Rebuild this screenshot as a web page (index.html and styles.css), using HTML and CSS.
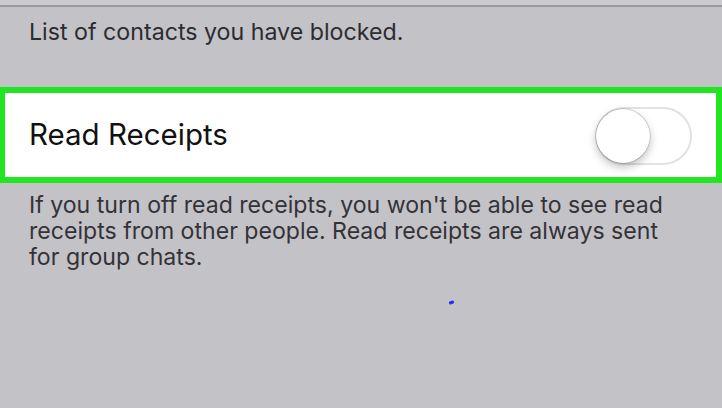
FILE: index.html
```html
<!DOCTYPE html>
<html>
<head>
<meta charset="utf-8">
<link rel="stylesheet" href="styles.css">
</head>
<body>
<div class="topbar"></div>
<p class="note">List of contacts you have blocked.</p>
<div class="cell">
  <span class="cell-label">Read Receipts</span>
  <div class="toggle"><div class="knob"></div></div>
</div>
<p class="footer">If you turn off read receipts, you won't be able to see read receipts from other people. Read receipts are always sent for group chats.</p>
<span class="dot"></span>
</body>
</html>
```
FILE: styles.css
```css
html, body { margin: 0; padding: 0; }
body {
  background: #c3c2c7;
  font-family: "Inter", "Liberation Sans", sans-serif;
  color: #2c2c30;
  width: 722px;
  height: 408px;
  overflow: hidden;
  position: relative;
}
.topbar {
  height: 5px;
  background: #cbcbce;
  border-bottom: 2px solid #9c9ca0;
}
.note {
  margin: 0;
  padding: 12px 0 0 29px;
  font-size: 23.2px;
  line-height: 26px;
}
.cell {
  margin-top: 42px;
  height: 84px;
  border: 6px solid #22e622;
  border-left-width: 5px;
  background: #fff;
  display: flex;
  align-items: center;
  justify-content: space-between;
  padding: 0 24px 0 24px;
}
.cell-label {
  font-size: 29.5px;
  color: #111;
  margin-top: -2px;
}
.toggle {
  width: 93px;
  height: 54px;
  border: 2px solid #e2e2e2;
  border-radius: 30px;
  position: relative;
  margin-top: 2px;
}
.knob {
  position: absolute;
  left: -1px;
  top: 0;
  width: 54px;
  height: 54px;
  border-radius: 50%;
  background: #fff;
  box-shadow: 0 0 0 0.5px rgba(0,0,0,0.25), 0 4px 8px rgba(0,0,0,0.25);
}
.footer {
  margin: 0;
  padding: 9px 40px 0 29px;
  font-size: 23.1px;
  line-height: 26px;
  color: #333337;
}
.dot {
  position: absolute;
  left: 449px;
  top: 301px;
  width: 5px;
  height: 3px;
  background: #2030ff;
  border-radius: 1px;
  transform: rotate(-20deg);
}
```
